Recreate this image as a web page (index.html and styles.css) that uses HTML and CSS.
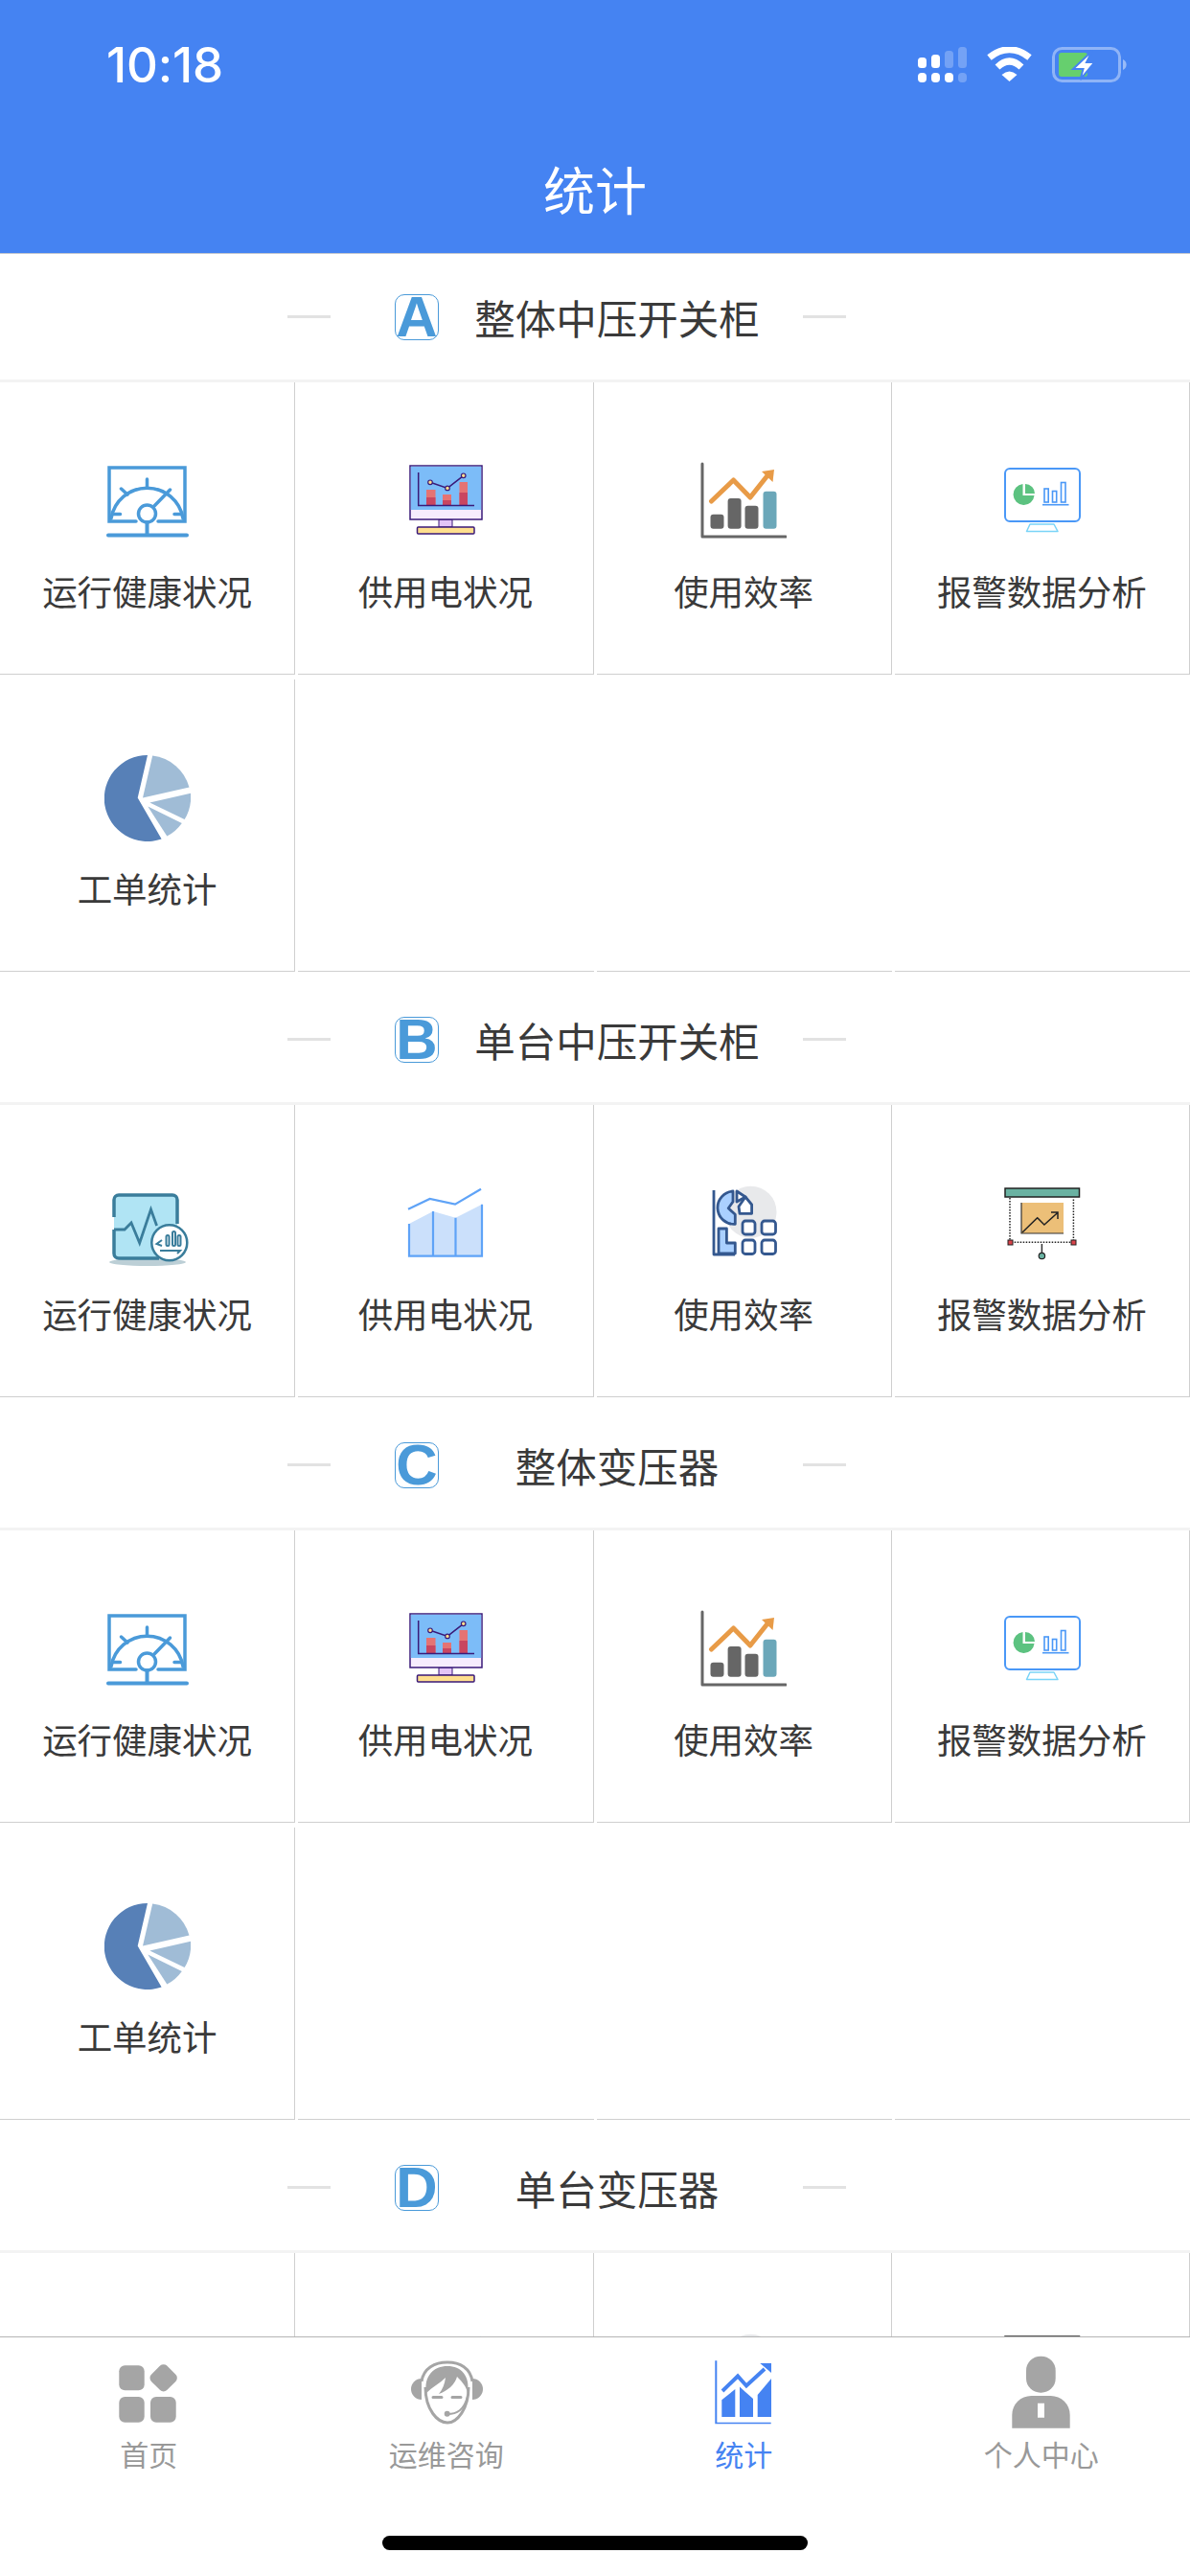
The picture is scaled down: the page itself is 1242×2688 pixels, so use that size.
FILE: index.html
```html
<!DOCTYPE html>
<html lang="zh-CN">
<head>
  <meta charset="UTF-8">
  <meta name="viewport" content="width=device-width, initial-scale=1.0">
  <title>统计</title>
  <link rel="stylesheet" href="styles.css">
</head>
<body>
  <svg class="defs" xmlns="http://www.w3.org/2000/svg">
    <symbol id="gauge" viewBox="0 0 90 90">
      <g fill="none" stroke="#4a9ad9" stroke-width="3.5" stroke-linecap="round">
        <path d="M33 66H5V10H84V66H56"/>
        <path d="M7 63A38 38 0 0 1 82 63"/>
        <circle cx="44.5" cy="58" r="9"/>
        <path d="M52 50L68.500 33M44.500 22V30M17.500 32L24 38M9.500 58.500H16.500M73 58.500H80.500"/>
        <path d="M44.500 67V80M4 80.500H86" stroke-width="4"/>
      </g>
    </symbol>
    <symbol id="monitor" viewBox="0 0 90 90">
      <rect x="38" y="64" width="14" height="8" fill="#e3c4f7" stroke="#3a1a78"/>
      <rect x="15.500" y="72" width="59.500" height="7" rx="1" fill="#ffdf8e" stroke="#3a1a78" stroke-width="1.500"/>
      <rect x="8" y="8" width="75" height="56" fill="#f6ecfd" stroke="#3a1a78" stroke-width="1.500"/>
      <rect x="8.800" y="8.800" width="73.400" height="45.200" fill="#7cbcf8"/>
      <rect x="25" y="33" width="9.500" height="16" fill="#e57373"/>
      <rect x="25" y="41" width="9.500" height="8" fill="#c94660"/>
      <rect x="42" y="38" width="9" height="11" fill="#e57373"/>
      <rect x="42" y="44" width="9" height="5" fill="#c94660"/>
      <rect x="59.500" y="25" width="8.500" height="24" fill="#e57373"/>
      <rect x="59.500" y="36" width="8.500" height="13" fill="#c94660"/>
      <path d="M16.700 15V49.500H75" fill="none" stroke="#3a1a78" stroke-width="1.500"/>
      <path d="M29 25.300L47 31.400L63.700 18.300" fill="none" stroke="#3a1a78" stroke-width="1.500"/>
      <g fill="#ffdf8e" stroke="#3a1a78" stroke-width="1.200">
        <circle cx="29" cy="25.300" r="2.300"/>
        <circle cx="47" cy="31.400" r="2.300"/>
        <circle cx="63.700" cy="18.300" r="2.300"/>
      </g>
    </symbol>
    <symbol id="trend" viewBox="0 0 90 90">
      <path d="M2 6V82H89" fill="none" stroke="#666" stroke-width="3" stroke-linecap="round" stroke-linejoin="round"/>
      <rect x="10.500" y="58.700" width="14" height="15" rx="3" fill="#666"/>
      <rect x="28.600" y="42" width="14" height="31.700" rx="3" fill="#666"/>
      <rect x="46.500" y="49.700" width="14" height="24" rx="3" fill="#666"/>
      <rect x="65.500" y="34.700" width="14" height="39" rx="3" fill="#6ba7b9"/>
      <path d="M11.500 45L34.500 23L52 41L71 17" fill="none" stroke="#e89b47" stroke-width="5" stroke-linecap="round" stroke-linejoin="round"/>
      <path d="M64 14L77 12L75.500 25Z" fill="#e89b47"/>
    </symbol>
    <symbol id="screen" viewBox="0 0 90 90">
      <rect x="7" y="11" width="78" height="55" rx="5" fill="#fff" stroke="#4a98f7" stroke-width="2"/>
      <path d="M33 69H58L62 76.500H29.500Z" fill="#fff" stroke="#7ad4f8" stroke-width="1.500" stroke-linejoin="round"/>
      <path d="M25.500 27A11 11 0 1 0 37.500 39H25.500Z" fill="#5cc280"/>
      <path d="M28 27A10 10 0 0 1 38 37H28Z" fill="#5cc280"/>
      <g fill="none" stroke="#4a98f7" stroke-width="1.600">
        <rect x="48" y="32" width="4.200" height="14"/>
        <rect x="56.500" y="34.500" width="4.200" height="11.500"/>
        <rect x="65.500" y="25.500" width="4.500" height="20.500"/>
        <path d="M46 48.700H73.500"/>
      </g>
    </symbol>
    <symbol id="pie" viewBox="0 0 90 90">
      <path d="M45 0A45 45 0 1 0 59.600 87.500L34.700 44.600Z" fill="#5780b7"/>
      <path d="M50.200 .6A45 45 0 0 1 88.500 33.600L40 44.600Z" fill="#a0bcd6"/>
      <path d="M90 39.700A45 45 0 0 1 83.600 67L47.300 49.500Z" fill="#a0bcd6"/>
      <path d="M80.800 71A45 45 0 0 1 65.300 84.600L45.300 53.600Z" fill="#a0bcd6"/>
    </symbol>
    <symbol id="health" viewBox="0 0 90 90">
      <g transform="translate(0 -3)">
        <ellipse cx="45" cy="88" rx="40" ry="4" fill="#bccfd6"/>
        <rect x="10" y="18" width="66" height="66" rx="5" fill="#b0e4f4"/>
        <g fill="none" stroke="#3a7d9b" stroke-width="3.500">
          <path d="M10 41V23A5 5 0 0 1 15 18H71A5 5 0 0 1 76 23V48"/>
          <path d="M10 54V79A5 5 0 0 0 15 84H57"/>
          <path d="M10 54H21L28 47L36.700 68L48.500 33L54.600 50" stroke-width="2.800"/>
        </g>
        <circle cx="67.800" cy="67.700" r="18.500" fill="#fff" stroke="#3a7d9b" stroke-width="2.500"/>
        <g fill="none" stroke="#3a7d9b" stroke-width="2">
          <rect x="64.500" y="60" width="3" height="11" rx="1.500"/>
          <rect x="71" y="56" width="3" height="15" rx="1.500"/>
          <rect x="76.500" y="60" width="3" height="11" rx="1.500"/>
          <path d="M60 65L54.500 69L60 71M58 76H79L76 79"/>
        </g>
      </g>
    </symbol>
    <symbol id="area" viewBox="0 0 90 90">
      <g transform="translate(0 -3)">
        <path d="M7 48L32 35L55.500 41.700L83 27.700V81.700H7Z" fill="#cbe0fb"/>
        <g fill="none" stroke="#5fa3f7" stroke-width="2.200">
          <path d="M7 48V81.700H83V27.700M32 35V81.700M55.500 41.700V81.700"/>
          <path d="M6 32.700L28.600 22L55 27.700L82 11.700"/>
        </g>
      </g>
    </symbol>
    <symbol id="blocks" viewBox="0 0 90 90">
      <g transform="translate(0 -3)">
        <circle cx="52.500" cy="35.700" r="27" fill="#e8e9eb"/>
        <g stroke="#34588f" stroke-width="2.800" stroke-linejoin="round">
          <path d="M14 13V80H36" fill="none"/>
          <path d="M19 53H27.400V68H36.300V79H19Z" fill="#aad0ff"/>
          <path d="M34 14A17 17 0 0 0 36.300 48.300V38.300L29.200 31.700L34 25Z" fill="#aad0ff"/>
          <path d="M38 14L47 20L38 25Z" fill="#fff"/>
          <path d="M47 20L40 30L41 37.300H53.600V28Z" fill="#fff"/>
          <g fill="#fff">
            <rect x="44" y="45" width="13" height="14" rx="3"/>
            <rect x="64" y="45" width="14.500" height="14" rx="3"/>
            <rect x="44" y="65" width="13" height="14.500" rx="3"/>
            <rect x="64" y="65" width="14.500" height="14.500" rx="3"/>
          </g>
        </g>
      </g>
    </symbol>
    <symbol id="board" viewBox="0 0 90 90">
      <g transform="translate(0 -3)">
        <rect x="7" y="11" width="77.500" height="9" fill="#6ab2a2" stroke="#222" stroke-width="1.500"/>
        <rect x="24" y="26" width="44" height="32" fill="#ecbf78"/>
        <path d="M24 26V58H68" fill="none" stroke="#333" stroke-width="1.200"/>
        <path d="M25 57L40.700 41.700L47.900 49L61.500 36.700M55 36H62V43" fill="none" stroke="#222" stroke-width="1.500"/>
        <path d="M12 21V67.300H78.400V21" fill="none" stroke="#222" stroke-width="1.500" stroke-dasharray="1.500 1.500"/>
        <rect x="10" y="65" width="5" height="5" fill="#d9434a" stroke="#222"/>
        <rect x="76" y="65" width="5" height="5" fill="#d9434a" stroke="#222"/>
        <path d="M45.400 69V78" stroke="#333" stroke-width="1.500"/>
        <circle cx="45.400" cy="81.500" r="3.200" fill="#6ab2a2" stroke="#222" stroke-width="1.200"/>
      </g>
    </symbol>
  </svg>

  <div class="app">
    <header class="topbar">
      <div class="status">
        <span class="time">10:18</span>
        <div class="status-icons">
          <svg width="51" height="37" viewBox="0 0 51 37">
            <g fill="#fff">
              <rect x="0" y="11" width="9" height="11" rx="3.500"/>
              <rect x="14" y="8" width="9" height="14" rx="3.500"/>
              <rect x="0" y="27" width="9" height="10" rx="4"/>
              <rect x="14" y="27" width="9" height="10" rx="4"/>
              <rect x="28" y="27" width="9" height="10" rx="4"/>
            </g>
            <g fill="#fff" opacity=".25">
              <rect x="28" y="4" width="9" height="18" rx="3.500"/>
              <rect x="42" y="0" width="9" height="22" rx="3.500"/>
              <rect x="42" y="27" width="9" height="10" rx="4"/>
            </g>
          </svg>
          <svg width="47" height="36" viewBox="0 0 47 36">
            <path d="M2.500 11Q23.500 -5.500 44.500 11M11 21Q23.500 9 36 21" fill="none" stroke="#fff" stroke-width="7"/>
            <path d="M15.500 29Q23.500 22 31.500 29L23.500 36Z" fill="#fff"/>
          </svg>
          <svg width="78" height="37" viewBox="0 0 78 37">
            <rect x="1.500" y="1.500" width="69" height="34" rx="9" fill="none" stroke="#fff" stroke-opacity=".4" stroke-width="3"/>
            <path d="M74 13A6 6 0 0 1 74 24Z" fill="#fff" opacity=".45"/>
            <rect x="7" y="6" width="30" height="25" rx="3" fill="#66cf6e"/>
            <path d="M42 4L22 23H32.500L29.500 34L44.500 16H36Z" fill="#fff" stroke="#4583f2" stroke-width="2"/>
          </svg>
        </div>
      </div>
      <h1 class="page-title">统计</h1>
    </header>

    <main class="content">
      <div class="heading">
        <span class="dash"></span>
        <span class="badge">A</span>
        <h2 class="heading-text">整体中压开关柜</h2>
        <span class="dash dash-end"></span>
      </div>
      <div class="grid">
        <div class="cell"><svg class="icon"><use href="#gauge"/></svg><span class="label">运行健康状况</span></div>
        <div class="cell"><svg class="icon"><use href="#monitor"/></svg><span class="label">供用电状况</span></div>
        <div class="cell"><svg class="icon"><use href="#trend"/></svg><span class="label">使用效率</span></div>
        <div class="cell"><svg class="icon"><use href="#screen"/></svg><span class="label">报警数据分析</span></div>
        <div class="cell"><svg class="icon"><use href="#pie"/></svg><span class="label">工单统计</span></div>
        <div class="cell empty"></div>
        <div class="cell empty"></div>
        <div class="cell empty"></div>
      </div>

      <div class="heading">
        <span class="dash"></span>
        <span class="badge">B</span>
        <h2 class="heading-text">单台中压开关柜</h2>
        <span class="dash dash-end"></span>
      </div>
      <div class="grid">
        <div class="cell"><svg class="icon"><use href="#health"/></svg><span class="label">运行健康状况</span></div>
        <div class="cell"><svg class="icon"><use href="#area"/></svg><span class="label">供用电状况</span></div>
        <div class="cell"><svg class="icon"><use href="#blocks"/></svg><span class="label">使用效率</span></div>
        <div class="cell"><svg class="icon"><use href="#board"/></svg><span class="label">报警数据分析</span></div>
      </div>

      <div class="heading">
        <span class="dash"></span>
        <span class="badge">C</span>
        <h2 class="heading-text">整体变压器</h2>
        <span class="dash dash-end"></span>
      </div>
      <div class="grid">
        <div class="cell"><svg class="icon"><use href="#gauge"/></svg><span class="label">运行健康状况</span></div>
        <div class="cell"><svg class="icon"><use href="#monitor"/></svg><span class="label">供用电状况</span></div>
        <div class="cell"><svg class="icon"><use href="#trend"/></svg><span class="label">使用效率</span></div>
        <div class="cell"><svg class="icon"><use href="#screen"/></svg><span class="label">报警数据分析</span></div>
        <div class="cell"><svg class="icon"><use href="#pie"/></svg><span class="label">工单统计</span></div>
        <div class="cell empty"></div>
        <div class="cell empty"></div>
        <div class="cell empty"></div>
      </div>

      <div class="heading">
        <span class="dash"></span>
        <span class="badge">D</span>
        <h2 class="heading-text">单台变压器</h2>
        <span class="dash dash-end"></span>
      </div>
      <div class="grid">
        <div class="cell"><svg class="icon"><use href="#health"/></svg></div>
        <div class="cell"><svg class="icon"><use href="#area"/></svg></div>
        <div class="cell"><svg class="icon"><use href="#blocks"/></svg></div>
        <div class="cell"><svg class="icon"><use href="#board"/></svg></div>
      </div>
    </main>

    <footer class="tabbar">
      <nav class="tabs">
        <div class="tab">
          <svg class="tab-icon" viewBox="0 0 70 70" fill="#a5a5a5">
            <rect x="4.300" y="7.300" width="26.400" height="26" rx="6"/>
            <rect x="38.800" y="8.700" width="23" height="23" rx="5" transform="rotate(45 50.300 20.700)"/>
            <rect x="4.300" y="40" width="26.400" height="26.700" rx="6"/>
            <rect x="37" y="40" width="26.700" height="26.700" rx="6"/>
          </svg>
          <span class="tab-label">首页</span>
        </div>
        <div class="tab">
          <svg class="tab-icon" viewBox="0 0 70 70" fill="#a5a5a5">
            <path d="M9 21A11 11 0 0 0 9 43Z"/>
            <path d="M62 21A11 11 0 0 1 62 43Z"/>
            <path d="M9 24C11 10 23 4 36 4C49 4 60 10 62 24" fill="none" stroke="#a5a5a5" stroke-width="3"/>
            <path d="M13 30C13 54 26 67 36 67C46 67 58 53 58 30" fill="none" stroke="#a5a5a5" stroke-width="3"/>
            <path d="M14 36C11 18 22 8 36 8C50 8 60 18 57 36C56 30 52 25 46 19C44 27 36 34 27 37C31 32 33 27 34 20C28 26 20 30 14 36Z"/>
            <path d="M21 40.500H30M41 40.500H50" fill="none" stroke="#a5a5a5" stroke-width="3" stroke-linecap="round"/>
            <circle cx="35.700" cy="57.700" r="3"/>
            <path d="M36 58C46 58 53 54 57 40" fill="none" stroke="#a5a5a5" stroke-width="2"/>
          </svg>
          <span class="tab-label">运维咨询</span>
        </div>
        <div class="tab active">
          <svg class="tab-icon" viewBox="0 0 70 70" fill="#4583f2">
            <path d="M5.300 2.300H7.300V66.700H63.700V68.300H5.300Z"/>
            <path d="M12.300 61V43.300L26.300 32V61Z"/>
            <path d="M31 61V29.500L37 35L45 42V61Z"/>
            <path d="M49.700 61V38L64 21V61Z"/>
            <path d="M13 34L29 18.500L38 28.500L57 11" fill="none" stroke="#4583f2" stroke-width="4"/>
            <path d="M52.300 5H64V15Z"/>
          </svg>
          <span class="tab-label">统计</span>
        </div>
        <div class="tab">
          <svg class="tab-icon" viewBox="0 0 70 70" fill="#a5a5a5">
            <rect x="19" y="-2.300" width="30.700" height="38" rx="15"/>
            <path d="M4.300 72.700V59A20 20 0 0 1 24.300 39H44.700A20 20 0 0 1 64.700 59V72.700ZM31 46.700V61.700H38V46.700Z" fill-rule="evenodd"/>
          </svg>
          <span class="tab-label">个人中心</span>
        </div>
      </nav>
      <div class="home-bar"></div>
    </footer>
  </div>
</body>
</html>
```

FILE: styles.css
```css
* {
  box-sizing: border-box;
}
body {
  margin: 0;
  font-family: "Noto Sans CJK SC", "Noto Sans", sans-serif;
  background-color: #fff;
  color: #3a3a3a;
}
.defs {
  display: none;
}
.app {
  display: flex;
  flex-direction: column;
  height: 2688px;
  overflow: hidden;
}

/* top bar */
.topbar {
  flex: none;
  height: 265px;
  padding-top: 48px;
  background-color: #4583f2;
  border-bottom: 1px solid #c4c8d0;
  color: #fff;
}
.status {
  display: flex;
  justify-content: space-between;
  align-items: center;
  height: 38px;
  padding: 0 66px 0 111px;
}
.time {
  font-family: Inter, sans-serif;
  font-size: 51px;
  font-weight: 500;
  letter-spacing: -.2px;
}
.status-icons {
  display: flex;
  align-items: center;
  gap: 21px;
}
.status-icons svg {
  display: block;
}
.page-title {
  margin: 75px 0 0;
  font-size: 54px;
  font-weight: 400;
  line-height: 72px;
  text-align: center;
}

/* sections */
.content {
  flex: 1;
  min-height: 0;
  overflow: hidden;
}
.heading {
  display: flex;
  align-items: center;
  height: 131px;
  padding-left: 300px;
}
.dash {
  flex: none;
  width: 45px;
  height: 3px;
  margin-right: 67px;
  background-color: #e2e2e2;
}
.dash-end {
  margin-right: 0;
  margin-left: 8px;
}
.badge {
  flex: none;
  width: 46px;
  height: 48px;
  border: 1px solid #4a9ad9;
  border-radius: 10px;
  color: #4a9ad9;
  font-family: "Liberation Sans", sans-serif;
  font-size: 60px;
  font-weight: 700;
  line-height: 46px;
  text-align: center;
}
.heading-text {
  flex: none;
  width: 372px;
  margin: 0;
  font-size: 42.500px;
  font-weight: 400;
  text-align: center;
}
.grid {
  display: grid;
  grid-template-columns: repeat(4, 1fr);
  grid-auto-rows: 305px;
  gap: 5px 3px;
  padding-bottom: 5px;
  border-top: 3px solid #f3f3f3;
}
.cell {
  display: flex;
  flex-direction: column;
  align-items: center;
  padding-top: 79px;
  border-right: 1px solid #cfcfcf;
  border-bottom: 1px solid #cfcfcf;
}
.cell.empty {
  border-right: none;
}
.icon {
  flex: none;
  width: 90px;
  height: 90px;
  overflow: visible;
}
.label {
  margin-top: 24px;
  font-size: 36.500px;
  line-height: 50px;
  white-space: nowrap;
}

/* bottom tabs */
.tabbar {
  flex: none;
  height: 250px;
  padding-top: 22px;
  background-color: #fff;
  border-top: 1px solid #b4b4b4;
}
.tabs {
  display: grid;
  grid-template-columns: repeat(4, 1fr);
}
.tab {
  display: flex;
  flex-direction: column;
  align-items: center;
  color: #999;
}
.tab.active {
  color: #4583f2;
}
.tab-icon {
  width: 70px;
  height: 70px;
  overflow: visible;
}
.tab-label {
  margin-top: 9px;
  font-size: 30px;
  line-height: 40px;
}
.home-bar {
  width: 444px;
  height: 15px;
  margin: 66px auto 0;
  border-radius: 8px;
  background-color: #000;
}
```
